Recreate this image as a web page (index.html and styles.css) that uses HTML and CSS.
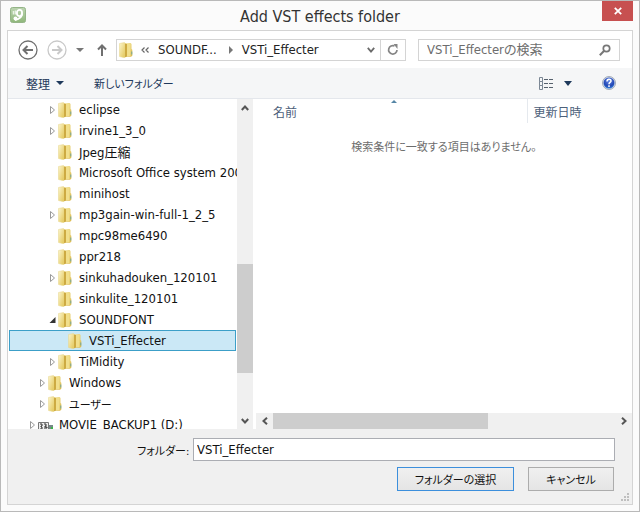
FILE: index.html
```html
<!DOCTYPE html>
<html lang="ja">
<head>
<meta charset="utf-8">
<title>Add VST effects folder</title>
<link rel="stylesheet" href="styles.css">
</head>
<body>
<svg class="defs" aria-hidden="true">
  <defs>
    <linearGradient id="front" x1="0" x2="1" y1="0" y2="1"><stop offset="0" stop-color="#fbf5cd"/><stop offset="1" stop-color="#e3c656"/></linearGradient>
    <linearGradient id="back" x1="0" x2="1" y1="0" y2="1"><stop offset="0" stop-color="#f6e9a0"/><stop offset="1" stop-color="#dcb94c"/></linearGradient>
    <linearGradient id="leaf" x1="0" x2="0" y1="0" y2="1"><stop offset="0" stop-color="#bdd5b2"/><stop offset="1" stop-color="#8fb77a"/></linearGradient>
    <radialGradient id="ball" cx=".5" cy=".3" r=".8"><stop offset="0" stop-color="#5f86e6"/><stop offset=".6" stop-color="#2347b5"/><stop offset="1" stop-color="#3c9be8"/></radialGradient>
    <symbol id="folder" viewBox="0 0 16 16">
      <path d="M5 1.500 11.500 1l1 1v5l.8.8v6l-1.300.9H6z" fill="url(#back)"/>
      <path d="M.5 1.500 5.500.5l.5 1v14L4.500 15.500l-4-1z" fill="url(#front)" stroke="#e6d588" stroke-width=".5"/>
      <path d="M6 1.500 8 2v12.500l-2 .8z" fill="#cdaa42"/>
      <path d="M8 2h3.500v12H8z" fill="#f1df8c"/>
      <path d="M12.800 9.500v3" stroke="#72a596" stroke-width="1"/>
    </symbol>
    <symbol id="closed" viewBox="0 0 8 10"><path d="M1.500 1.500v7l4-3.500z" fill="#fff" stroke="#999"/></symbol>
    <symbol id="open" viewBox="0 0 8 10"><path d="M6.500 2v6h-6z" fill="#333"/></symbol>
  </defs>
</svg>
<main class="window">
  <header class="titlebar">
    <svg class="app-icon" viewBox="0 0 16 16"><rect x=".5" y=".5" width="15" height="15" rx="2" fill="url(#leaf)" stroke="#94b487"/><path d="M3.500 4v3.500M5.500 3.500v4" stroke="#e9f2e5" stroke-width="1.500"/><ellipse cx="9.500" cy="6" rx="2.600" ry="3.200" fill="none" stroke="#fff" stroke-width="1.800"/><path d="M12 6.500c0 3-2.500 5.500-7 6.500" fill="none" stroke="#fff" stroke-width="2"/><circle cx="5.500" cy="11.500" r="2" fill="#fff"/></svg>
    <h1 class="title">Add VST effects folder</h1>
    <button class="close" aria-label="閉じる"><svg width="8" height="8" viewBox="0 0 8 8"><path d="M.8.8l6.400 6.400M7.200.8.8 7.200" stroke="#fff" stroke-width="1.800"/></svg></button>
  </header>
  <section class="frame">
    <nav class="navbar">
      <button class="round" aria-label="戻る"><svg width="20" height="20" viewBox="0 0 20 20" fill="none" stroke="#707070"><circle cx="10" cy="10" r="9" stroke-width="1.300"/><path d="M15 10H6M9.500 6 5.500 10l4 4" stroke-width="2"/></svg></button>
      <button class="round" aria-label="進む"><svg width="20" height="20" viewBox="0 0 20 20" fill="none" stroke="#c9c9c9"><circle cx="10" cy="10" r="9" stroke-width="1.300"/><path d="M5 10h9M10.500 6l4 4-4 4" stroke-width="2"/></svg></button>
      <button class="recent" aria-label="履歴"><svg width="8" height="4" viewBox="0 0 8 4"><path d="M0 0h8L4 4z" fill="#777"/></svg></button>
      <button class="up" aria-label="上へ"><svg width="10" height="12" viewBox="0 0 10 12" fill="none" stroke="#707070" stroke-width="2"><path d="M5 12V2M1 5.500l4-4 4 4"/></svg></button>
      <div class="address">
        <svg class="folder"><use href="#folder"/></svg>
        <span class="chevrons"><svg width="8" height="6" viewBox="0 0 8 6"><path d="M3.500.5 1 3l2.500 2.500M7.500.5 5 3l2.500 2.500" fill="none" stroke="#666" stroke-width="1.200"/></svg></span>
        <a class="crumb" href="#">SOUNDF...</a>
        <svg class="sep" width="4" height="8" viewBox="0 0 4 8"><path d="M0 0l4 4-4 4z" fill="#777"/></svg>
        <a class="crumb last" href="#">VSTi_Effecter</a>
        <button class="drop" aria-label="以前の場所"><svg width="8" height="6" viewBox="0 0 8 6"><path d="M.8.8 4 4.500 7.200.8" fill="none" stroke="#6b6b6b" stroke-width="1.800"/></svg></button>
        <button class="refresh" aria-label="更新"><svg width="12" height="12" viewBox="0 0 12 12"><path d="M7.500 2A4.200 4.200 0 1 0 10 6" fill="none" stroke="#858585" stroke-width="1.700"/><path d="M6.500 0h4v5z" fill="#858585"/></svg></button>
      </div>
      <label class="search">
        <input type="text" placeholder="VSTi_Effecterの検索" aria-label="検索">
        <svg width="12" height="12" viewBox="0 0 12 12"><circle cx="7.500" cy="4.500" r="3.200" fill="none" stroke="#777" stroke-width="1.700"/><path d="M5.200 6.800.8 11.200" stroke="#777" stroke-width="2"/></svg>
      </label>
    </nav>
    <div class="toolbar">
      <button class="tool">整理<svg width="8" height="4" viewBox="0 0 8 4"><path d="M0 0h8L4 4z" fill="#1e395b"/></svg></button>
      <button class="tool kana">新しいフォルダー</button>
      <button class="tool view" aria-label="表示方法"><svg width="16" height="13" viewBox="0 0 16 13" fill="none"><path d="M1.500.5h3v4h-3zM1.500 4.500h3v4h-3zM1.500 8.500h3v4h-3z" stroke="#7b8794"/><path d="M6 2.500h4m1 0h4M6 6.500h4m1 0h4M6 10.500h4m1 0h4" stroke="#56616d"/></svg><svg class="caret" width="8" height="5" viewBox="0 0 8 5"><path d="M0 0h8L4 5z" fill="#1e395b"/></svg></button>
      <button class="tool help" aria-label="ヘルプ"><svg width="14" height="14" viewBox="0 0 14 14"><circle cx="7" cy="7" r="6.500" fill="#d9dfea" stroke="#8d98a9" stroke-width=".8"/><circle cx="7" cy="7" r="5.500" fill="url(#ball)"/><path d="M5 5.500c0-3 4-2.800 4-.6C9 6.500 7 6.400 7 8.200M7 9.300v1.600" fill="none" stroke="#fff" stroke-width="1.500"/></svg></button>
    </div>
    <div class="content">
      <ul class="tree">
        <li class="deep"><svg class="exp"><use href="#closed"/></svg><svg class="folder"><use href="#folder"/></svg><span>eclipse</span></li>
        <li class="deep"><svg class="exp"><use href="#closed"/></svg><svg class="folder"><use href="#folder"/></svg><span>irvine1_3_0</span></li>
        <li class="deep"><i class="exp"></i><svg class="folder"><use href="#folder"/></svg><span>Jpeg圧縮</span></li>
        <li class="deep"><i class="exp"></i><svg class="folder"><use href="#folder"/></svg><span>Microsoft Office system 2007</span></li>
        <li class="deep"><i class="exp"></i><svg class="folder"><use href="#folder"/></svg><span>minihost</span></li>
        <li class="deep"><svg class="exp"><use href="#closed"/></svg><svg class="folder"><use href="#folder"/></svg><span>mp3gain-win-full-1_2_5</span></li>
        <li class="deep"><i class="exp"></i><svg class="folder"><use href="#folder"/></svg><span>mpc98me6490</span></li>
        <li class="deep"><i class="exp"></i><svg class="folder"><use href="#folder"/></svg><span>ppr218</span></li>
        <li class="deep"><svg class="exp"><use href="#closed"/></svg><svg class="folder"><use href="#folder"/></svg><span>sinkuhadouken_120101</span></li>
        <li class="deep"><i class="exp"></i><svg class="folder"><use href="#folder"/></svg><span>sinkulite_120101</span></li>
        <li class="deep"><svg class="exp"><use href="#open"/></svg><svg class="folder"><use href="#folder"/></svg><span>SOUNDFONT</span></li>
        <li class="deepest selected"><i class="exp"></i><svg class="folder"><use href="#folder"/></svg><span>VSTi_Effecter</span></li>
        <li class="deep"><svg class="exp"><use href="#closed"/></svg><svg class="folder"><use href="#folder"/></svg><span>TiMidity</span></li>
        <li class="mid"><svg class="exp"><use href="#closed"/></svg><svg class="folder"><use href="#folder"/></svg><span>Windows</span></li>
        <li class="mid"><svg class="exp"><use href="#closed"/></svg><svg class="folder"><use href="#folder"/></svg><span class="kana">ユーザー</span></li>
        <li class="top"><svg class="exp"><use href="#closed"/></svg><svg class="folder" viewBox="0 0 16 16"><path d="M.5 5.500h10v7H.5z" fill="#eee" stroke="#777"/><path d="M2 7h2v2H3v1h1v2H2M6 7h2v2H7v1h2v1H6" fill="none" stroke="#333"/><path d="M11 8h4v5h-4z" fill="#788"/><path d="M13 10h2v2h-2z" fill="#3cb34a"/></svg><span>MOVIE_BACKUP1 (D:)</span></li>
      </ul>
      <div class="vscroll">
        <button aria-label="上へスクロール"><svg width="8" height="6" viewBox="0 0 8 6"><path d="M.8 5 4 1.500 7.200 5" fill="none" stroke="#555" stroke-width="2"/></svg></button>
        <div class="vtrack"><div class="vthumb"></div></div>
        <button aria-label="下へスクロール"><svg width="8" height="6" viewBox="0 0 8 6"><path d="M.8 1 4 4.500 7.200 1" fill="none" stroke="#555" stroke-width="2"/></svg></button>
      </div>
      <div class="list">
        <table>
          <thead><tr><th class="name">名前<svg class="sort" width="6" height="3" viewBox="0 0 6 3"><path d="M0 3h6L3 0z" fill="#5585a5"/></svg></th><th class="date">更新日時</th></tr></thead>
          <tbody><tr><td class="kana" colspan="2">検索条件に一致する項目はありません。</td></tr></tbody>
        </table>
        <div class="hscroll">
          <button aria-label="左へスクロール"><svg width="6" height="8" viewBox="0 0 6 8"><path d="M5 .8 1.500 4 5 7.200" fill="none" stroke="#555" stroke-width="2"/></svg></button>
          <div class="htrack"><div class="hthumb"></div></div>
          <button aria-label="右へスクロール"><svg width="6" height="8" viewBox="0 0 6 8"><path d="M1 .8 4.500 4 1 7.200" fill="none" stroke="#555" stroke-width="2"/></svg></button>
        </div>
      </div>
    </div>
    <form class="footer">
      <div class="field"><label class="kana" for="folder-name">フォルダー:</label><input id="folder-name" type="text" value="VSTi_Effecter"></div>
      <div class="actions"><button type="button" class="push kana primary">フォルダーの選択</button><button type="button" class="push kana">キャンセル</button></div>
      <svg class="grip" width="8" height="8" viewBox="0 0 8 8"><path d="M6 0h2v2H6zM3 3h2v2H3zM6 3h2v2H6zM0 6h2v2H0zM3 6h2v2H3zM6 6h2v2H6z" fill="#bfbfbf"/></svg>
    </form>
  </section>
</main>
</body>
</html>
```
FILE: styles.css
```css
* { box-sizing: border-box; }
body, h1, ul, form { margin: 0; padding: 0; }
body, button, input {
  font-family: "DejaVu Sans Condensed", "Noto Sans CJK JP", sans-serif;
  font-size: 13px;
  font-feature-settings: "palt";
}
body { color: #111; }
svg { display: block; flex: none; }
button { border: 0; padding: 0; background: none; display: flex; align-items: center; justify-content: center; flex: none; }
.defs { position: absolute; width: 0; height: 0; }

.window {
  display: flex;
  flex-direction: column;
  min-height: 100vh;
  padding: 0 6px 6px;
  border: 1px solid #b9b9b9;
  background: #fbfbfb;
}
.titlebar { display: flex; align-items: flex-start; height: 29px; }
.app-icon { width: 16px; height: 16px; margin: 6px 0 0 3px; }
.title { flex: 1; padding-left: 12px; font-size: 16px; font-weight: 400; line-height: 32px; text-align: center; color: #333; }
.close { width: 31px; height: 20px; background: #c75050; }

.frame { flex: 1; display: flex; flex-direction: column; border: 1px solid #d4d4d4; background: #fff; }
.navbar { display: flex; align-items: center; height: 37px; padding: 0 12px 0 10px; }
.round { margin-right: 9px; }
.recent { margin: 0 13px 0 0; }
.up { margin-right: 9px; }
.address { flex: 288; display: flex; align-items: center; height: 22px; min-width: 0; border: 1px solid #d4d4d4; }
.address .folder { margin-left: 2px; }
.chevrons { margin: 0 9px 0 1px; }
.crumb { color: #222; text-decoration: none; white-space: nowrap; }
.sep { margin: 0 9px 0 12px; }
.last { flex: 1; }
.drop { width: 18px; }
.refresh { width: 25px; height: 20px; border-left: 1px solid #d4d4d4; }
.search { flex: 184; display: flex; align-items: center; height: 22px; min-width: 0; margin-left: 12px; padding: 0 8px; border: 1px solid #d4d4d4; }
.search input { flex: 1; min-width: 0; padding: 0; border: 0; outline: 0; background: none; }
.search input::placeholder { color: #6d6d6d; opacity: 1; }

.toolbar { display: flex; align-items: center; height: 31px; padding: 0 16px 0 18px; border-bottom: 1px solid #e4e7ec; background: #f5f6f7; }
.tool { margin-right: 30px; gap: 6px; font-size: 12px; color: #1e395b; }
.view { margin: 0 30px 0 auto; gap: 10px; }
.help { margin: 0; }

.content { flex: 1; display: flex; min-height: 330px; }
.tree { flex: 229; min-width: 0; height: 330px; overflow: hidden; list-style: none; }
.tree li { display: flex; align-items: center; height: 21px; margin: 0 1px; border: 1px solid transparent; white-space: nowrap; }
.tree .top { padding-left: 19px; }
.tree .mid { padding-left: 29px; }
.tree .deep { padding-left: 39px; }
.tree .deepest { padding-left: 49px; }
.tree .selected { border-color: #3c9fc8; background: #cbe8f6; }
.exp { width: 8px; height: 10px; margin-right: 1px; flex: none; }
.folder { width: 16px; height: 16px; margin-right: 5px; }
.vscroll { flex: none; display: flex; flex-direction: column; width: 16px; background: #f0f0f0; }
.vscroll button { height: 17px; }
.vtrack { flex: 1; display: flex; flex-direction: column; }
.vtrack::before { content: ""; flex: 148; }
.vthumb { flex: 109; background: #cdcdcd; }
.vtrack::after { content: ""; flex: 39; }
.list { flex: 376; min-width: 0; display: flex; flex-direction: column; margin-left: 3px; }
table { width: 100%; border-collapse: collapse; table-layout: fixed; }
th { position: relative; height: 24px; padding: 0; font-size: 12px; font-weight: 400; text-align: left; color: #4c607a; }
.name { padding-left: 17px; }
.date { width: 105px; padding-left: 6px; border-left: 1px solid #e5e9ee; }
.sort { position: absolute; top: 1px; left: 50%; }
td { height: 46px; padding: 0; text-align: center; color: #6d6d6d; }
.hscroll { display: flex; height: 16px; margin-top: auto; background: #f0f0f0; }
.hscroll button { width: 17px; }
.htrack { flex: 1; display: flex; }
.hthumb { width: 63%; background: #cdcdcd; }

.footer { position: relative; height: 75px; padding: 9px 17px 0 129px; background: #f0f0f0; }
.field { display: flex; align-items: center; }
.field label { width: 56px; white-space: nowrap; }
.field input { flex: 1; min-width: 0; height: 23px; padding: 0 3px; border: 1px solid #abadb3; background: #fff; color: #111; }
.actions { display: flex; justify-content: flex-end; gap: 14px; margin: 6px 1px 0 0; }
.push { width: 86px; height: 24px; border: 1px solid #acacac; background: linear-gradient(#f0f0f0, #e5e5e5); color: #111; }
.primary { width: 117px; border-color: #3c8fdc; }
.grip { position: absolute; right: 3px; bottom: 3px; }

.kana { font-size: 11px; }
```
